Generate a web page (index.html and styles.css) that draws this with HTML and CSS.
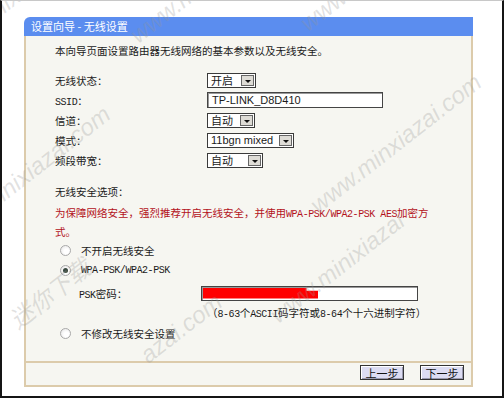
FILE: index.html
```html
<!DOCTYPE html>
<html lang="zh-CN">
<head>
  <meta charset="UTF-8">
  <title>设置向导 - 无线设置</title>
  <link rel="stylesheet" href="styles.css">
</head>
<body>
  <div class="screen">
    <div class="panel">
      <div class="panel-title">设置向导 - 无线设置</div>

      <div class="panel-body">
        <p class="intro">本向导页面设置路由器无线网络的基本参数以及无线安全。</p>

        <!-- Basic wireless parameters -->
        <div class="form">
          <div class="row">
            <span class="label">无线状态：</span>
            <span class="select w-status"><span class="select-text">开启</span><span class="select-arrow"></span></span>
          </div>
          <div class="row">
            <span class="label"><span class="mono">SSID</span>：</span>
            <span class="textbox ssid">TP-LINK_D8D410</span>
          </div>
          <div class="row">
            <span class="label">信道：</span>
            <span class="select w-channel"><span class="select-text">自动</span><span class="select-arrow"></span></span>
          </div>
          <div class="row">
            <span class="label">模式：</span>
            <span class="select w-mode"><span class="select-text latin">11bgn mixed</span><span class="select-arrow"></span></span>
          </div>
          <div class="row">
            <span class="label">频段带宽：</span>
            <span class="select w-band"><span class="select-text">自动</span><span class="select-arrow"></span></span>
          </div>
        </div>

        <!-- Wireless security -->
        <p class="section-title">无线安全选项：</p>
        <p class="warning">为保障网络安全，强烈推荐开启无线安全，并使用<span class="mono">WPA-PSK/WPA2-PSK AES</span>加密方式。</p>

        <div class="radio-row"><span class="radio"></span>不开启无线安全</div>
        <div class="radio-row"><span class="radio checked"></span><span class="mono">WPA-PSK/WPA2-PSK</span></div>
        <div class="psk-row">
          <span class="psk-label"><span class="mono">PSK</span>密码：</span>
          <span class="textbox psk"><span class="psk-mask"></span></span>
        </div>
        <div class="hint">（<span class="mono">8-63</span>个<span class="mono">ASCII</span>码字符或<span class="mono">8-64</span>个十六进制字符）</div>
        <div class="radio-row"><span class="radio"></span>不修改无线安全设置</div>
      </div>

      <div class="panel-footer">
        <button class="step-button">上一步</button>
        <button class="step-button">下一步</button>
      </div>
    </div>

    <!-- site watermarks over the screenshot -->
    <span class="watermark" style="left: -20px; top: 10px;">minixiazai</span>
    <span class="watermark" style="left: 310px; top: 8px;">www.minxiazai</span>
    <span class="watermark" style="left: 140px; top: 20px;">www.minxiazai.com</span>
    <span class="watermark" style="left: -10px; top: 190px;">minixiazai.com</span>
    <span class="watermark" style="left: 320px; top: 190px;">www.minxiazai.com</span>
    <span class="watermark" style="left: 280px; top: 300px;">www.minixiazai</span>
    <span class="watermark" style="left: 20px; top: 300px;">迷你下载</span>
    <span class="watermark" style="left: 150px; top: 340px;">azai.com</span>
  </div>
</body>
</html>
```

FILE: styles.css
```css
/* Reset default styles */
* {
  margin: 0;
  padding: 0;
  box-sizing: border-box;
}

body {
  width: 504px;
  height: 400px;
  background: #fff;
  font-family: "Noto Sans CJK SC", sans-serif;
  font-size: 10.5px;
  color: #1a1a1a;
  overflow: hidden;
}

.screen {
  position: relative;
  height: 398px;
  border: 2px solid #151515;
  border-top: 1px solid #c8c8c8;
  padding: 16px 0 0 22px;
  overflow: hidden;
}

.mono {
  font-family: "Liberation Mono", monospace;
  font-size: 10px;
  letter-spacing: -0.45px;
}

.latin {
  font-family: "Liberation Sans", Arial, sans-serif;
  font-size: 11px;
}

/* Panel */
.panel {
  width: 449px;
}

.panel-title {
  height: 19px;
  line-height: 19px;
  padding-left: 7px;
  background: #5b8def;
  color: #fff;
  font-size: 11px;
  border-top-left-radius: 6px;
}

.panel-body {
  height: 325px;
  padding: 6px 0 0 29px;
  background: #f6f6f1;
  border-left: 2px solid #dccbab;
  border-right: 2px solid #dccbab;
}

.intro {
  line-height: 18px;
}

/* Form rows */
.form {
  margin-top: 10px;
}

.row {
  display: flex;
  align-items: center;
  height: 20px;
}

.label {
  width: 152px;
}

.select {
  display: inline-flex;
  height: 15px;
  padding: 1px;
  border: 1px solid #3a3a3a;
  background: #fff;
  font-size: 11px;
}

.select-text {
  flex: 1;
  padding-left: 2px;
  line-height: 11px;
}

.select-arrow {
  position: relative;
  width: 13px;
  background: #dedcd6;
  border: 1px solid #666;
}

.select-arrow::after {
  content: "";
  position: absolute;
  left: 3px;
  top: 4px;
  border-left: 3px solid transparent;
  border-right: 3px solid transparent;
  border-top: 3px solid #111;
}

.w-status { width: 49px; }
.w-channel { width: 48px; }
.w-mode { width: 87px; }
.w-band { width: 56px; }

.textbox {
  display: inline-flex;
  align-items: center;
  background: #fff;
  border: 1px solid #444;
  box-shadow: inset 1px 1px 0 #999;
}

.ssid {
  width: 176px;
  height: 16px;
  padding-left: 4px;
  font-family: "Liberation Sans", Arial, sans-serif;
  font-size: 11px;
}

/* Security options */
.section-title {
  margin-top: 12px;
  line-height: 20px;
}

.warning {
  width: 386px;
  margin-top: 2px;
  line-height: 17px;
  color: #b3121b;
}

.radio-row {
  display: flex;
  align-items: center;
  height: 20px;
  padding-left: 5px;
}

.radio {
  position: relative;
  width: 11px;
  height: 11px;
  margin-right: 10px;
  border: 1px solid #a9a9a9;
  border-radius: 50%;
  background: radial-gradient(circle at 60% 60%, #fff 30%, #e2e2e2 100%);
}

.radio.checked::after {
  content: "";
  position: absolute;
  left: 2px;
  top: 2px;
  width: 5px;
  height: 5px;
  border-radius: 50%;
  background: #3a4a40;
}

.psk-row {
  display: flex;
  align-items: center;
  height: 20px;
  margin-top: 3px;
  padding-left: 24px;
}

.psk-label {
  width: 122px;
}

.psk {
  width: 217px;
  height: 15px;
  padding: 1px;
  align-items: stretch;
}

.psk-mask {
  width: 115px;
  background: #f00;
  clip-path: polygon(0 0, 90% 0, 90% 30%, 100% 30%, 100% 100%, 0 100%);
}

.hint {
  height: 20px;
  line-height: 20px;
  padding-left: 152px;
}

/* Footer */
.panel-footer {
  display: flex;
  justify-content: flex-end;
  gap: 16px;
  height: 26px;
  padding: 2px 7px 0 0;
  background: #f6f6f1;
  border: 2px solid #dccbab;
}

.step-button {
  width: 44px;
  height: 15px;
  border: 1px solid #333;
  background: #dcdcf2;
  box-shadow: inset 1px 1px 0 #fff, inset -1px -1px 0 #9a9ab0;
  font-family: "Noto Sans CJK SC", sans-serif;
  font-size: 11px;
  line-height: 12px;
  color: #111;
}

/* Watermarks */
.watermark {
  position: absolute;
  font-family: "Liberation Sans", sans-serif;
  font-size: 24px;
  font-style: italic;
  color: rgba(150, 150, 150, 0.28);
  white-space: nowrap;
  transform: rotate(-38deg);
  transform-origin: left bottom;
  pointer-events: none;
}
```
